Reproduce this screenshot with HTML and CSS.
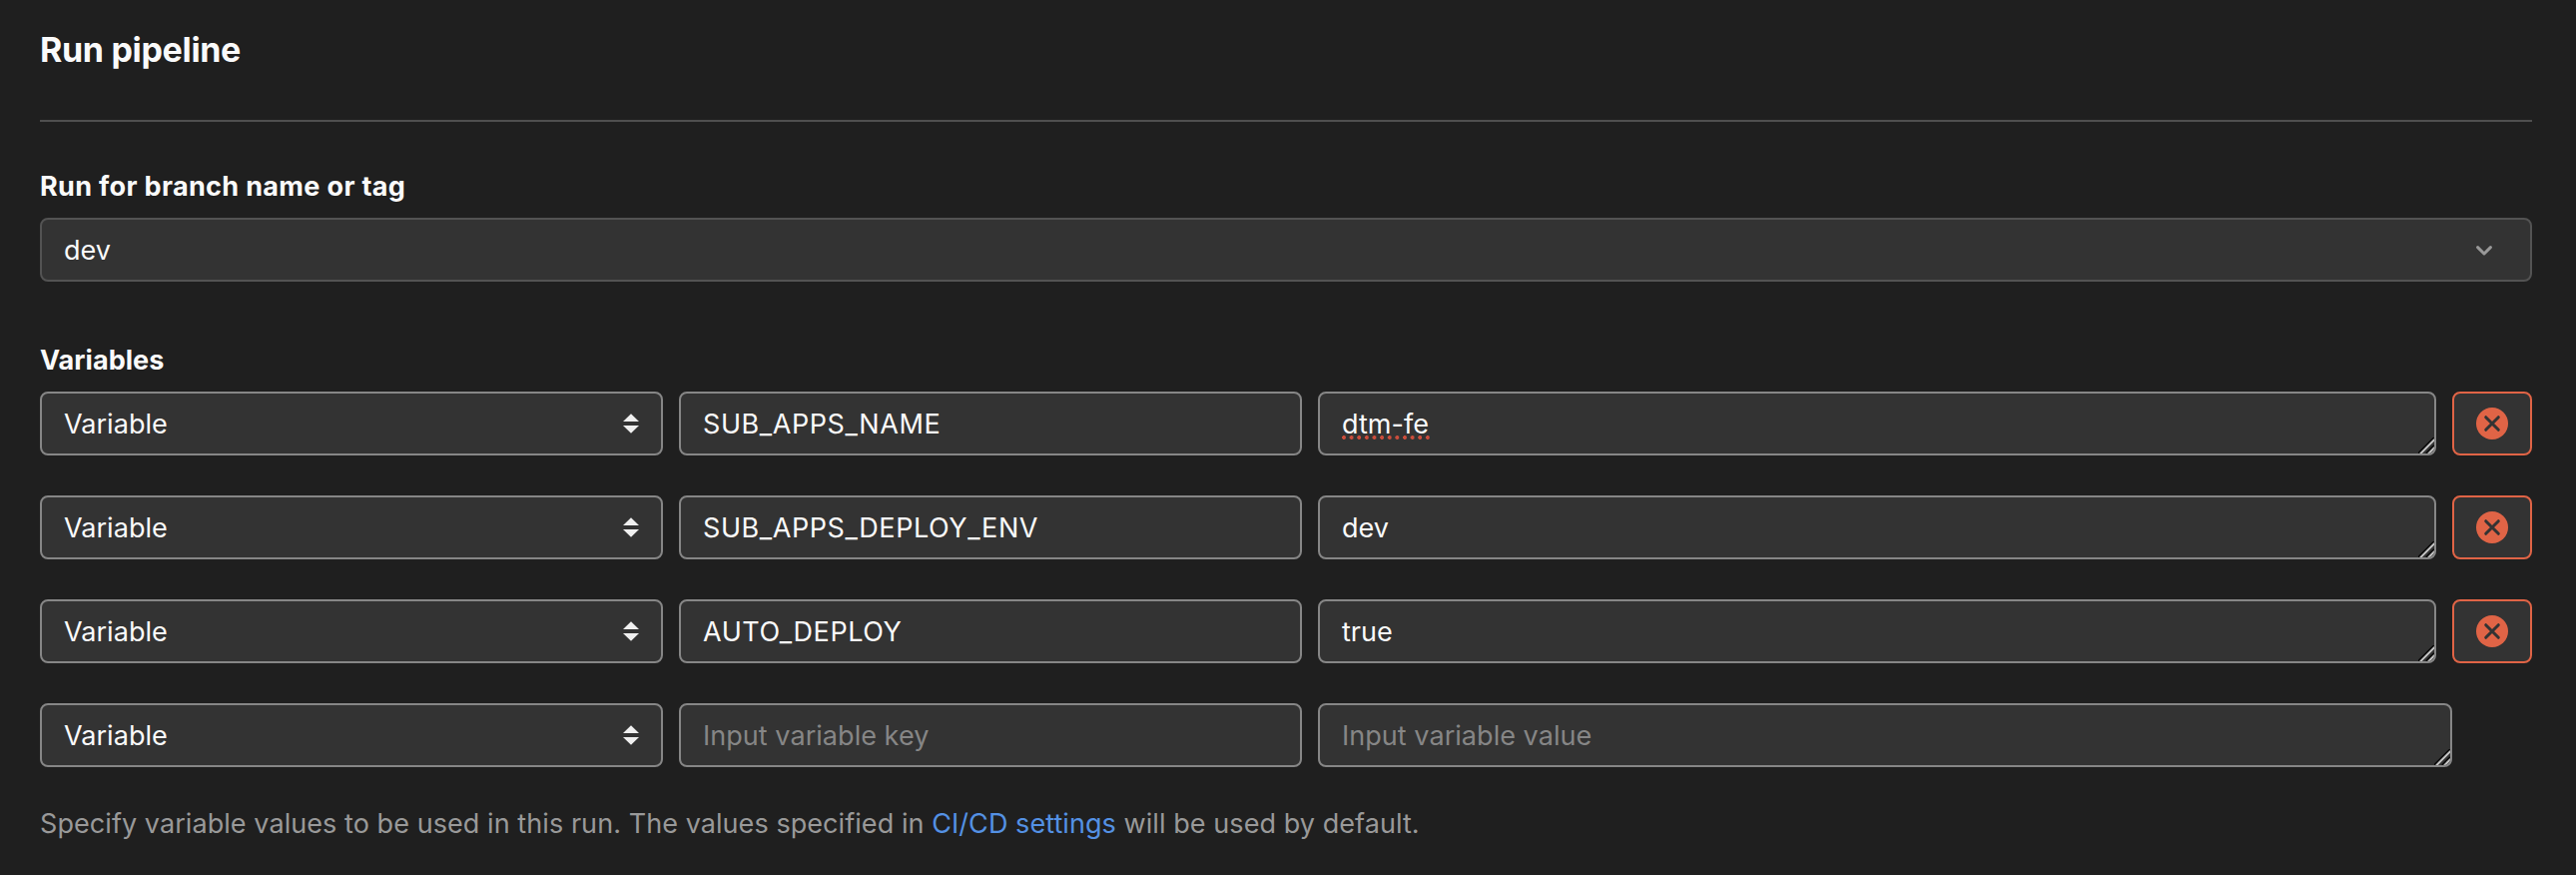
FILE: index.html
```html
<!DOCTYPE html>
<html lang="en">
<head>
<meta charset="utf-8">
<title>Run pipeline</title>
<link rel="stylesheet" href="styles.css">
</head>
<body>
<svg class="defs" aria-hidden="true">
  <symbol id="sort" viewBox="0 0 16 20"><path d="M8 0.3 16 8H0zM0 12h16L8 19.7z" fill="#f0f0f0"/></symbol>
  <symbol id="grip" viewBox="0 0 16 16">
    <path d="M0 16 16 0M8 16l8-8" stroke="#0c0c0c" stroke-width="2"/>
    <path d="M2 16.4 16.4 2M10 16.4 16.4 10" stroke="#c4c4c4" stroke-width="2"/>
  </symbol>
  <symbol id="clear" viewBox="0 0 32 32">
    <circle cx="16" cy="16" r="16" fill="#e06446"/>
    <path d="M9.7 9.7l12.6 12.6M22.3 9.7 9.7 22.3" stroke="#333" stroke-width="3" stroke-linecap="round"/>
  </symbol>
</svg>
<main class="page">
  <h1 class="title">Run pipeline</h1>
  <hr class="rule">
  <div class="label label-branch">Run for branch name or tag</div>
  <div class="field branch">
    <span>dev</span>
    <svg class="chevron" viewBox="0 0 16 10"><path d="M1.6 1.6 8 8l6.4-6.4" fill="none" stroke="#999" stroke-width="3" stroke-linecap="round" stroke-linejoin="round"/></svg>
  </div>
  <div class="label label-vars">Variables</div>
  <div class="rows">
    <div class="row">
      <div class="field"><span>Variable</span><svg class="sort"><use href="#sort"/></svg></div>
      <div class="field caps"><span>SUB_APPS_NAME</span></div>
      <div class="field value"><span class="misspelled">dtm-fe</span><svg class="grip"><use href="#grip"/></svg></div>
      <div class="remove"><svg class="clear"><use href="#clear"/></svg></div>
    </div>
    <div class="row">
      <div class="field"><span>Variable</span><svg class="sort"><use href="#sort"/></svg></div>
      <div class="field caps"><span>SUB_APPS_DEPLOY_ENV</span></div>
      <div class="field value"><span>dev</span><svg class="grip"><use href="#grip"/></svg></div>
      <div class="remove"><svg class="clear"><use href="#clear"/></svg></div>
    </div>
    <div class="row">
      <div class="field"><span>Variable</span><svg class="sort"><use href="#sort"/></svg></div>
      <div class="field caps"><span>AUTO_DEPLOY</span></div>
      <div class="field value"><span>true</span><svg class="grip"><use href="#grip"/></svg></div>
      <div class="remove"><svg class="clear"><use href="#clear"/></svg></div>
    </div>
    <div class="row row-new">
      <div class="field"><span>Variable</span><svg class="sort"><use href="#sort"/></svg></div>
      <div class="field placeholder"><span>Input variable key</span></div>
      <div class="field value placeholder"><span>Input variable value</span><svg class="grip"><use href="#grip"/></svg></div>
    </div>
  </div>
  <p class="help">Specify variable values to be used in this run. The values specified in <a class="link">CI/CD settings</a> will be used by default.</p>
</main>
</body>
</html>
```
FILE: styles.css
```css
* { box-sizing: border-box; }
body {
  margin: 0;
  background: #1f1f1f;
  color: #fafafa;
  font: 400 27px/36px Inter, "Liberation Sans", sans-serif;
  letter-spacing: 0.04px;
}
svg { display: block; }
.defs { position: absolute; width: 0; height: 0; }
.page { padding: 30px 44px 0 40px; }
.title {
  margin: 0;
  font-size: 34px;
  line-height: 40px;
  font-weight: 700;
  letter-spacing: -0.32px;
}
.rule {
  margin: 50px 0 0;
  height: 2px;
  border: 0;
  background: #4f4f4f;
}
.label { font-weight: 700; margin-bottom: 13px; }
.label-branch { margin-top: 47px; letter-spacing: 0.34px; }
.label-vars { margin-top: 61px; letter-spacing: 0.05px; }
.field {
  position: relative;
  display: flex;
  align-items: center;
  justify-content: space-between;
  height: 64px;
  padding: 0 22px;
  border: 2px solid #868686;
  border-radius: 8px;
  background: #333;
}
.field > span { padding-top: 2px; }
.branch { border-color: #535353; padding-right: 38px; }
.chevron { width: 16px; height: 10px; margin-top: 2px; }
.rows { display: grid; gap: 40px; }
.row {
  display: grid;
  grid-template-columns: 624px 624px 1fr 80px;
  gap: 16px;
}
.row-new { grid-template-columns: 624px 624px 1fr; padding-right: 80px; }
.sort { width: 16px; height: 20px; }
.caps { letter-spacing: 0.58px; }
.placeholder { color: #868686; }
.grip {
  position: absolute;
  right: 0;
  bottom: 0;
  width: 16px;
  height: 16px;
  border-bottom-right-radius: 6px;
}
.misspelled { position: relative; }
.misspelled::after {
  content: "";
  position: absolute;
  left: -0.5px;
  top: 31px;
  width: 89px;
  height: 4px;
  background: radial-gradient(circle at 2px 2px, #cc4d3c 1.7px, transparent 2.2px) 0 0 / 7.64px 4px repeat-x;
}
.remove {
  display: flex;
  align-items: center;
  justify-content: center;
  height: 64px;
  border: 2px solid #e06446;
  border-radius: 8px;
  background: #333;
}
.clear { width: 32px; height: 32px; }
.help { margin: 39px 0 0; color: #999; letter-spacing: 0.065px; }
.link { color: #5491e4; }
```
